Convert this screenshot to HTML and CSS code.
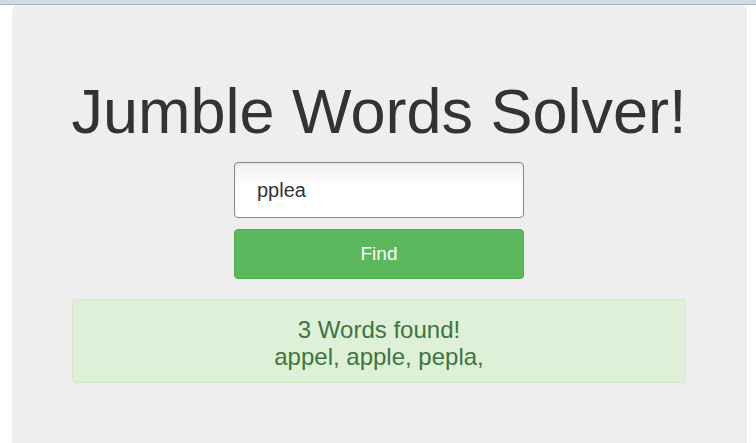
FILE: index.html
```html
<!DOCTYPE html>
<html>
<head>
<meta charset="utf-8">
<link rel="stylesheet" href="styles.css">
</head>
<body>
<div class="topbar"></div>
<div class="jumbotron">
  <h1 class="title">Jumble Words Solver!</h1>
  <form class="form">
    <input class="input" type="text" value="pplea">
    <button class="btn" type="button">Find</button>
  </form>
  <div class="alert">
    <div>3 Words found!</div>
    <div>appel, apple, pepla,</div>
  </div>
</div>
</body>
</html>
```
FILE: styles.css
```css
html, body {
  margin: 0;
  padding: 0;
  background: #fff;
  font-family: "Liberation Sans", Arial, sans-serif;
  color: #333;
  overflow: hidden;
}
.topbar {
  height: 4px;
  background: #d4dbde;
  border-bottom: 1px solid #a9b7bf;
}
.jumbotron {
  margin-left: 12px;
  width: 735px;
  height: 460px;
  background: #eee;
  border-radius: 6px 6px 0 0;
  padding-top: 72px;
  padding-right: 1px;
  box-sizing: border-box;
}
.title {
  margin: 0;
  font-size: 63px;
  font-weight: 400;
  line-height: 1.1;
  text-align: center;
  color: #333;
}
.form {
  width: 290px;
  margin: 16px auto 0;
  display: flex;
  flex-direction: column;
  gap: 11px;
}
.input {
  box-sizing: border-box;
  height: 56px;
  width: 100%;
  border: 1px solid #7d8d98;
  border-radius: 4px;
  padding: 0 22px;
  font-family: "Liberation Sans", Arial, sans-serif;
  font-size: 20px;
  color: #333;
  background: linear-gradient(#f1f1f1, #fff 45%);
  box-shadow: inset 0 1px 2px rgba(0,0,0,0.08);
  outline: none;
}
.btn {
  box-sizing: border-box;
  height: 50px;
  width: 100%;
  background: #5cb85c;
  border: 1px solid #4cae4c;
  border-radius: 4px;
  color: #fff;
  font-family: "Liberation Sans", Arial, sans-serif;
  font-size: 19px;
  padding: 0;
}
.alert {
  margin: 20px 60px 0;
  height: 84px;
  box-sizing: border-box;
  background: #dff0d8;
  border: 1px solid #d6e9c6;
  border-radius: 4px;
  color: #3c763d;
  font-size: 24px;
  line-height: 27px;
  text-align: center;
  padding-top: 16px;
}
```
